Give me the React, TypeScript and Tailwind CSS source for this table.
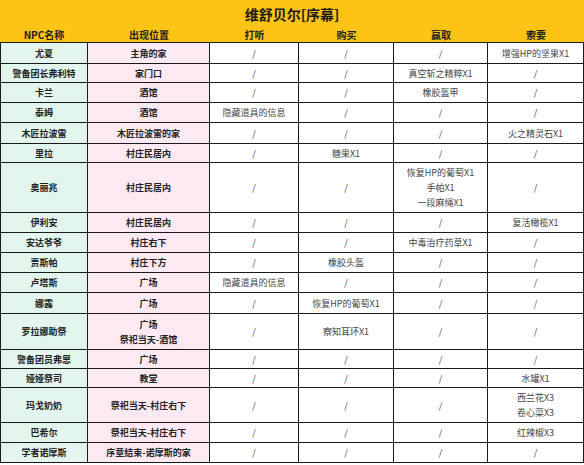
import React from "react";

type Row = { h: number; c: string[][] };

const rows: Row[] = [
  { h: 21, c: [["尤夏"], ["主角的家"], ["/"], ["/"], ["/"], ["增强HP的坚果X1"]] },
  { h: 19, c: [["警备团长弗利特"], ["家门口"], ["/"], ["/"], ["真空斩之精粹X1"], ["/"]] },
  { h: 20, c: [["卡兰"], ["酒馆"], ["/"], ["/"], ["橡胶盔甲"], ["/"]] },
  { h: 20, c: [["泰姆"], ["酒馆"], ["隐藏道具的信息"], ["/"], ["/"], ["/"]] },
  { h: 21, c: [["木匠拉波雷"], ["木匠拉波雷的家"], ["/"], ["/"], ["/"], ["火之精灵石X1"]] },
  { h: 19, c: [["里拉"], ["村庄民居内"], ["/"], ["糖果X1"], ["/"], ["/"]] },
  { h: 50, c: [["奥丽兆"], ["村庄民居内"], ["/"], ["/"], ["恢复HP的葡萄X1", "手帕X1", "一段麻绳X1"], ["/"]] },
  { h: 20, c: [["伊利安"], ["村庄民居内"], ["/"], ["/"], ["/"], ["复活橄榄X1"]] },
  { h: 20, c: [["安达爷爷"], ["村庄右下"], ["/"], ["/"], ["中毒治疗药草X1"], ["/"]] },
  { h: 20, c: [["贾斯帕"], ["村庄下方"], ["/"], ["橡胶头盔"], ["/"], ["/"]] },
  { h: 20, c: [["卢塔斯"], ["广场"], ["隐藏道具的信息"], ["/"], ["/"], ["/"]] },
  { h: 21, c: [["娜露"], ["广场"], ["/"], ["恢复HP的葡萄X1"], ["/"], ["/"]] },
  { h: 36, c: [["罗拉娜助祭"], ["广场", "祭祀当天-酒馆"], ["/"], ["察知耳环X1"], ["/"], ["/"]] },
  { h: 19, c: [["警备团员弗恩"], ["广场"], ["/"], ["/"], ["/"], ["/"]] },
  { h: 19, c: [["娅娅祭司"], ["教堂"], ["/"], ["/"], ["/"], ["水罐X1"]] },
  { h: 35, c: [["玛戈奶奶"], ["祭祀当天-村庄右下"], ["/"], ["/"], ["/"], ["西兰花X3", "卷心菜X3"]] },
  { h: 20, c: [["巴希尔"], ["祭祀当天-村庄右下"], ["/"], ["/"], ["/"], ["红辣椒X3"]] },
  { h: 20, c: [["学者诺摩斯"], ["序章结束-诺摩斯的家"], ["/"], ["/"], ["/"], ["/"]] },
];

const headers = ["NPC名称", "出现位置", "打听", "购买", "赢取", "索要"];

const cellCls = [
  "bg-[#e3f6ee] font-bold text-[#222] border-l",
  "bg-[#fce9f2] font-bold text-[#222]",
  "bg-white text-[#444]",
  "bg-white text-[#444]",
  "bg-white text-[#444]",
  "bg-white text-[#444]",
];

export default function App() {
  return (
    <div
      className="w-[584px] h-[465px] bg-white overflow-hidden"
      style={{ fontFamily: '"Noto Sans CJK SC", "Noto Sans", sans-serif' }}
    >
      <div className="h-[43px] bg-[#fdc416] border-b border-[#1a1a1a] flex flex-col">
        <div className="h-[26px] flex items-center justify-center text-[14px] font-bold text-[#1a1a1a] pt-[2px]">
          维舒贝尔[序幕]
        </div>
        <div className="grid grid-cols-[88px_122px_89px_95px_94px_96px] flex-1">
          {headers.map((h) => (
            <div key={h} className="flex items-center justify-center text-[10px] font-bold text-[#222]">
              {h}
            </div>
          ))}
        </div>
      </div>
      {rows.map((r, i) => (
        <div
          key={i}
          className="grid grid-cols-[88px_122px_89px_95px_94px_96px]"
          style={{ height: r.h }}
        >
          {r.c.map((lines, j) => (
            <div
              key={j}
              className={`${cellCls[j]} border-r border-b border-[#1a1a1a] flex flex-col items-center justify-center text-[9px] leading-[15px]`}
            >
              {lines.map((t, k) => (
                <span key={k}>{t}</span>
              ))}
            </div>
          ))}
        </div>
      ))}
    </div>
  );
}
